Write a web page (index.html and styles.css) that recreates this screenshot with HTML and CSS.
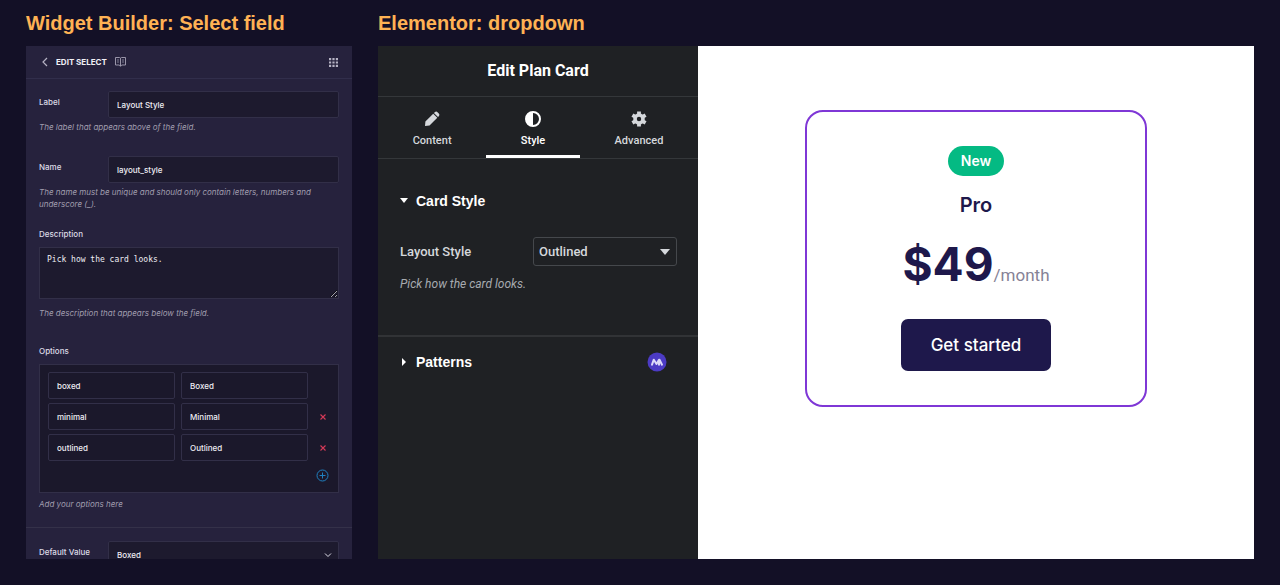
FILE: index.html
```html
<!DOCTYPE html>
<html lang="en">
<head>
    <meta charset="UTF-8">
    <meta name="viewport" content="width=device-width, initial-scale=1.0">
    <title>Select field</title>
    <link rel="stylesheet" href="styles.css">
</head>
<body>
    <section class="column">
        <h2 class="column-title">Widget Builder: Select field</h2>
        <div class="builder">
            <div class="builder-header">
                <button class="icon-button" aria-label="Back">
                    <svg width="6" height="10" viewBox="0 0 6 10"><path d="M5 1 1 5l4 4" fill="none" stroke="currentColor" stroke-width="1.2"/></svg>
                </button>
                <h3>EDIT SELECT</h3>
                <svg class="book-icon" width="11" height="10" viewBox="0 0 11 10" fill="none" stroke="currentColor"><path d="M.5.5h4l1 .7 1-.7h4V8H6.700L5.500 9.300 4.300 8H.5zM5.500 1.200v8" stroke-width=".9"/><path d="M2 3h2M2 5h2M7 3h2M7 5h2" stroke-width=".7"/></svg>
                <button class="icon-button grid-button" aria-label="Fields">
                    <svg width="9" height="9" viewBox="0 0 9 9" fill="currentColor"><path d="M0 0h2.200v2.200H0zM3.400 0h2.200v2.200H3.400zM6.800 0H9v2.200H6.800zM0 3.400h2.200v2.200H0zM3.400 3.400h2.200v2.200H3.400zM6.800 3.400H9v2.200H6.800zM0 6.800h2.200V9H0zM3.400 6.800h2.200V9H3.400zM6.800 6.800H9V9H6.800z"/></svg>
                </button>
            </div>
            <form class="builder-form">
                <div class="field">
                    <div class="field-row">
                        <label for="label">Label</label>
                        <input type="text" id="label" value="Layout Style">
                    </div>
                    <p class="hint">The label that appears above of the field.</p>
                </div>
                <div class="field">
                    <div class="field-row">
                        <label for="name">Name</label>
                        <input type="text" id="name" value="layout_style">
                    </div>
                    <p class="hint">The name must be unique and should only contain letters, numbers and underscore (_).</p>
                </div>
                <div class="field field-stacked">
                    <label for="description">Description</label>
                    <textarea id="description">Pick how the card looks.</textarea>
                    <p class="hint">The description that appears below the field.</p>
                </div>
                <div class="field field-stacked field-options">
                    <span class="field-label">Options</span>
                    <div class="options">
                        <input type="text" value="boxed" aria-label="Option value">
                        <input type="text" value="Boxed" aria-label="Option label">
                        <span></span>
                        <input type="text" value="minimal" aria-label="Option value">
                        <input type="text" value="Minimal" aria-label="Option label">
                        <button type="button" class="remove" aria-label="Remove option">
                            <svg width="6" height="6" viewBox="0 0 6 6"><path d="M.5.5l5 5M5.500.5l-5 5" stroke="currentColor" stroke-width="1.1"/></svg>
                        </button>
                        <input type="text" value="outlined" aria-label="Option value">
                        <input type="text" value="Outlined" aria-label="Option label">
                        <button type="button" class="remove" aria-label="Remove option">
                            <svg width="6" height="6" viewBox="0 0 6 6"><path d="M.5.5l5 5M5.500.5l-5 5" stroke="currentColor" stroke-width="1.1"/></svg>
                        </button>
                        <button type="button" class="add" aria-label="Add option">
                            <svg width="13" height="13" viewBox="0 0 13 13" fill="none" stroke="currentColor"><circle cx="6.500" cy="6.500" r="5.500"/><path d="M6.500 3.500v6M3.500 6.500h6"/></svg>
                        </button>
                    </div>
                    <p class="hint">Add your options here</p>
                </div>
                <div class="field field-default">
                    <div class="field-row">
                        <label for="default">Default Value</label>
                        <div class="select-wrap">
                            <select id="default">
                                <option>Boxed</option>
                                <option>Minimal</option>
                                <option>Outlined</option>
                            </select>
                            <svg width="8" height="5" viewBox="0 0 8 5"><path d="M1 1l3 3 3-3" fill="none" stroke="currentColor"/></svg>
                        </div>
                    </div>
                </div>
            </form>
        </div>
    </section>

    <section class="column">
        <h2 class="column-title">Elementor: dropdown</h2>
        <div class="editor">
            <div class="panel">
                <h3 class="panel-title">Edit Plan Card</h3>
                <div class="tabs">
                    <button class="tab">
                        <svg width="16" height="16" viewBox="0 0 16 16" fill="currentColor"><path d="M1 15l.4-4.600 7.800-7.700 4.100 4.100-7.800 7.700zM9.900 2l.9-.8c.8-.8 1.900-.8 2.700 0l1.300 1.300c.8.8.8 1.900 0 2.700l-.8.9z"/></svg>
                        Content
                    </button>
                    <button class="tab active">
                        <svg width="16" height="16" viewBox="0 0 16 16" fill="currentColor"><path fill-rule="evenodd" d="M8 0a8 8 0 1 0 0 16A8 8 0 0 0 8 0zm0 2a6 6 0 0 1 0 12z"/></svg>
                        Style
                    </button>
                    <button class="tab">
                        <svg width="16" height="16" viewBox="0 0 16 16" fill="none" stroke="currentColor"><circle cx="8" cy="8" r="4" stroke-width="3.600"/><path d="M8 3.500V.4M8 12.500v3.100M4.100 5.700L1.400 4.200M11.900 10.300l2.700 1.500M4.100 10.300l-2.700 1.500M11.900 5.700l2.700-1.500" stroke-width="3.800"/></svg>
                        Advanced
                    </button>
                </div>
                <div class="section section-open">
                    <button class="section-title">
                        <svg width="8" height="8" viewBox="0 0 8 8" fill="currentColor"><path d="M0 1h8L4 6z"/></svg>
                        Card Style
                    </button>
                    <div class="control">
                        <label for="layout">Layout Style</label>
                        <div class="select-wrap">
                            <select id="layout">
                                <option>Boxed</option>
                                <option>Minimal</option>
                                <option selected>Outlined</option>
                            </select>
                            <svg width="10" height="6" viewBox="0 0 10 6" fill="currentColor"><path d="M0 0h10L5 6z"/></svg>
                        </div>
                    </div>
                    <p class="control-hint">Pick how the card looks.</p>
                </div>
                <div class="section">
                    <button class="section-title">
                        <svg width="8" height="8" viewBox="0 0 8 8" fill="currentColor"><path d="M2 0v8l4-4z"/></svg>
                        Patterns
                        <svg class="badge" width="20" height="20" viewBox="0 0 20 20"><circle cx="10" cy="10" r="9.500" fill="#4c3bc4"/><path d="M5 12.700l1.800-5 2.700 4.300 2.500-4.300v5M12.500 7.700l2.500 5" fill="none" stroke="#dcd9f8" stroke-width="2" stroke-linecap="round" stroke-linejoin="round"/></svg>
                    </button>
                </div>
            </div>
            <div class="canvas">
                <div class="plan-card">
                    <span class="plan-badge">New</span>
                    <h4>Pro</h4>
                    <div class="price">$49<span>/month</span></div>
                    <a href="#" class="plan-button">Get started</a>
                </div>
            </div>
        </div>
    </section>
</body>
</html>
```

FILE: styles.css
```css
* {
    box-sizing: border-box;
}
body {
    margin: 0;
    height: 100vh;
    padding: 0 26px 26px;
    display: grid;
    grid-template-columns: 326px 1fr;
    grid-template-rows: minmax(0, 1fr);
    gap: 26px;
    background-color: #131026;
    font-family: Inter, sans-serif;
}
h2, h3, h4, p {
    margin: 0;
}
button, input, select, textarea {
    font: inherit;
    color: inherit;
}
button {
    padding: 0;
    border: none;
    background: none;
    cursor: pointer;
}
svg {
    display: block;
}
.column {
    display: flex;
    flex-direction: column;
    min-width: 0;
}
.column-title {
    height: 46px;
    flex-shrink: 0;
    font: bold 20px/46px "Liberation Sans", Arial, sans-serif;
    color: #ffb254;
}

/* Builder */
.builder {
    flex: 1;
    min-height: 0;
    overflow: hidden;
    background-color: #26223d;
    color: #dddbe6;
    font-size: 8px;
    line-height: 12px;
    font-weight: 500;
}
.builder-header {
    display: flex;
    align-items: center;
    height: 33px;
    padding: 0 14px 0 16px;
    border-bottom: 1px solid #312e4b;
}
.builder-header h3 {
    margin: 0 8px;
    font-size: 8px;
    font-weight: 700;
    color: #f1f0f6;
}
.book-icon {
    color: #a5a2b4;
}
.icon-button {
    color: #b5b2c3;
}
.grid-button {
    margin-left: auto;
}
.builder-form {
    padding-top: 12px;
}
.field {
    margin: 0 13px 23px;
}
.field-row {
    display: flex;
}
.field-row label {
    width: 69px;
    padding-top: 5px;
    flex-shrink: 0;
}
.builder input,
.builder select {
    flex: 1;
    width: 100%;
    min-width: 0;
    height: 27px;
    padding: 0 8px;
    border: 1px solid #322f48;
    border-radius: 2px;
    background-color: #1d1a2e;
    color: #eeedf3;
}
.hint {
    margin-top: 3px;
    font-style: italic;
    font-weight: 400;
    color: #a09dae;
}
.field-stacked {
    margin-top: -5px;
    margin-bottom: 26px;
}
.field-stacked label,
.field-stacked .field-label {
    display: block;
    margin-bottom: 7px;
}
.field-stacked .hint {
    margin-top: 8px;
}
.builder textarea {
    display: block;
    width: 100%;
    height: 52px;
    padding: 6px 7px;
    border: 1px solid #322f48;
    background-color: #1d1a2e;
    color: #eeedf3;
    font: 8px/12px "DejaVu Sans Mono", monospace;
}
.field-options {
    margin-top: 0;
    margin-bottom: 17px;
}
.field-options .hint {
    margin-top: 5px;
}
.options {
    display: grid;
    grid-template-columns: 1fr 1fr 17px;
    gap: 4px 6px;
    padding: 7px 7px 10px 8px;
    border: 1px solid #322f48;
    background-color: #1b182b;
}
.builder .options input {
    background-color: #1b182b;
}
.remove,
.add {
    display: flex;
    align-items: center;
    justify-content: center;
    color: #d63a58;
}
.add {
    grid-column: 3;
    margin-top: 4px;
    color: #1f80c0;
}
.field-default {
    margin: 0;
    padding: 13px 13px 23px;
    border-top: 1px solid #343149;
}
.select-wrap {
    position: relative;
    flex: 1;
}
.select-wrap select {
    appearance: none;
    width: 100%;
}
.select-wrap svg {
    position: absolute;
    top: 50%;
    right: 7px;
    transform: translateY(-50%);
    pointer-events: none;
}

/* Editor */
.editor {
    flex: 1;
    display: flex;
    min-height: 0;
}
.panel {
    width: 320px;
    flex-shrink: 0;
    background-color: #1f2124;
    color: #d5d8dc;
    font-family: Roboto, sans-serif;
    font-weight: 500;
}
.panel-title {
    height: 51px;
    border-bottom: 1px solid #34373a;
    font-size: 16px;
    line-height: 49px;
    text-align: center;
    color: #fff;
}
.tabs {
    display: flex;
    height: 62px;
    border-bottom: 1px solid #34373a;
}
.tab {
    flex: 1 1 auto;
    display: flex;
    flex-direction: column;
    align-items: center;
    gap: 7px;
    padding-top: 14px;
    border-bottom: 3px solid transparent;
    font-size: 11px;
    line-height: 14px;
}
.tab.active {
    border-color: #fff;
    color: #fff;
}
.section {
    padding: 15px 21px 15px 22px;
}
.section-open {
    padding-top: 32px;
    padding-bottom: 43px;
    border-bottom: 2px solid #313336;
}
.section-title {
    display: flex;
    align-items: center;
    gap: 8px;
    width: 100%;
    font: bold 14px/20px "Liberation Sans", Arial, sans-serif;
    color: #fff;
}
.badge {
    margin: 0 10px 0 auto;
}
.control {
    display: flex;
    align-items: center;
    justify-content: space-between;
    margin-top: 26px;
    font-size: 13px;
}
.control .select-wrap {
    flex: 0 0 144px;
}
.control select {
    height: 29px;
    padding: 0 5px;
    border: 1px solid #45484c;
    border-radius: 3px;
    background-color: #1f2124;
}
.control-hint {
    margin-top: 10px;
    font-size: 12px;
    line-height: 16px;
    font-style: italic;
    font-weight: 400;
    color: #a7abb0;
}

/* Plan card */
.canvas {
    flex: 1;
    min-width: 0;
    padding-top: 64px;
    background-color: #fff;
}
.plan-card {
    display: flex;
    flex-direction: column;
    align-items: center;
    max-width: 342px;
    margin: 0 auto;
    padding: 34px;
    border: 2px solid #7f37d6;
    border-radius: 18px;
    color: #1e184b;
}
.plan-badge {
    padding: 0 13px;
    border-radius: 15px;
    background-color: #04ba83;
    color: #fff;
    font-size: 14px;
    line-height: 30px;
    font-weight: 600;
}
.plan-card h4 {
    margin-top: 16px;
    font-size: 20px;
    line-height: 26px;
    font-weight: 600;
}
.price {
    margin-top: 16px;
    font-size: 46px;
    line-height: 60px;
    font-weight: 700;
}
.price span {
    font-family: Roboto, sans-serif;
    font-size: 17px;
    line-height: 1;
    font-weight: 400;
    color: #868296;
}
.plan-button {
    margin-top: 25px;
    padding: 0 30px;
    border-radius: 7px;
    background-color: #1e184b;
    color: #fff;
    font-size: 17px;
    line-height: 52px;
    font-weight: 500;
    text-decoration: none;
}
```
